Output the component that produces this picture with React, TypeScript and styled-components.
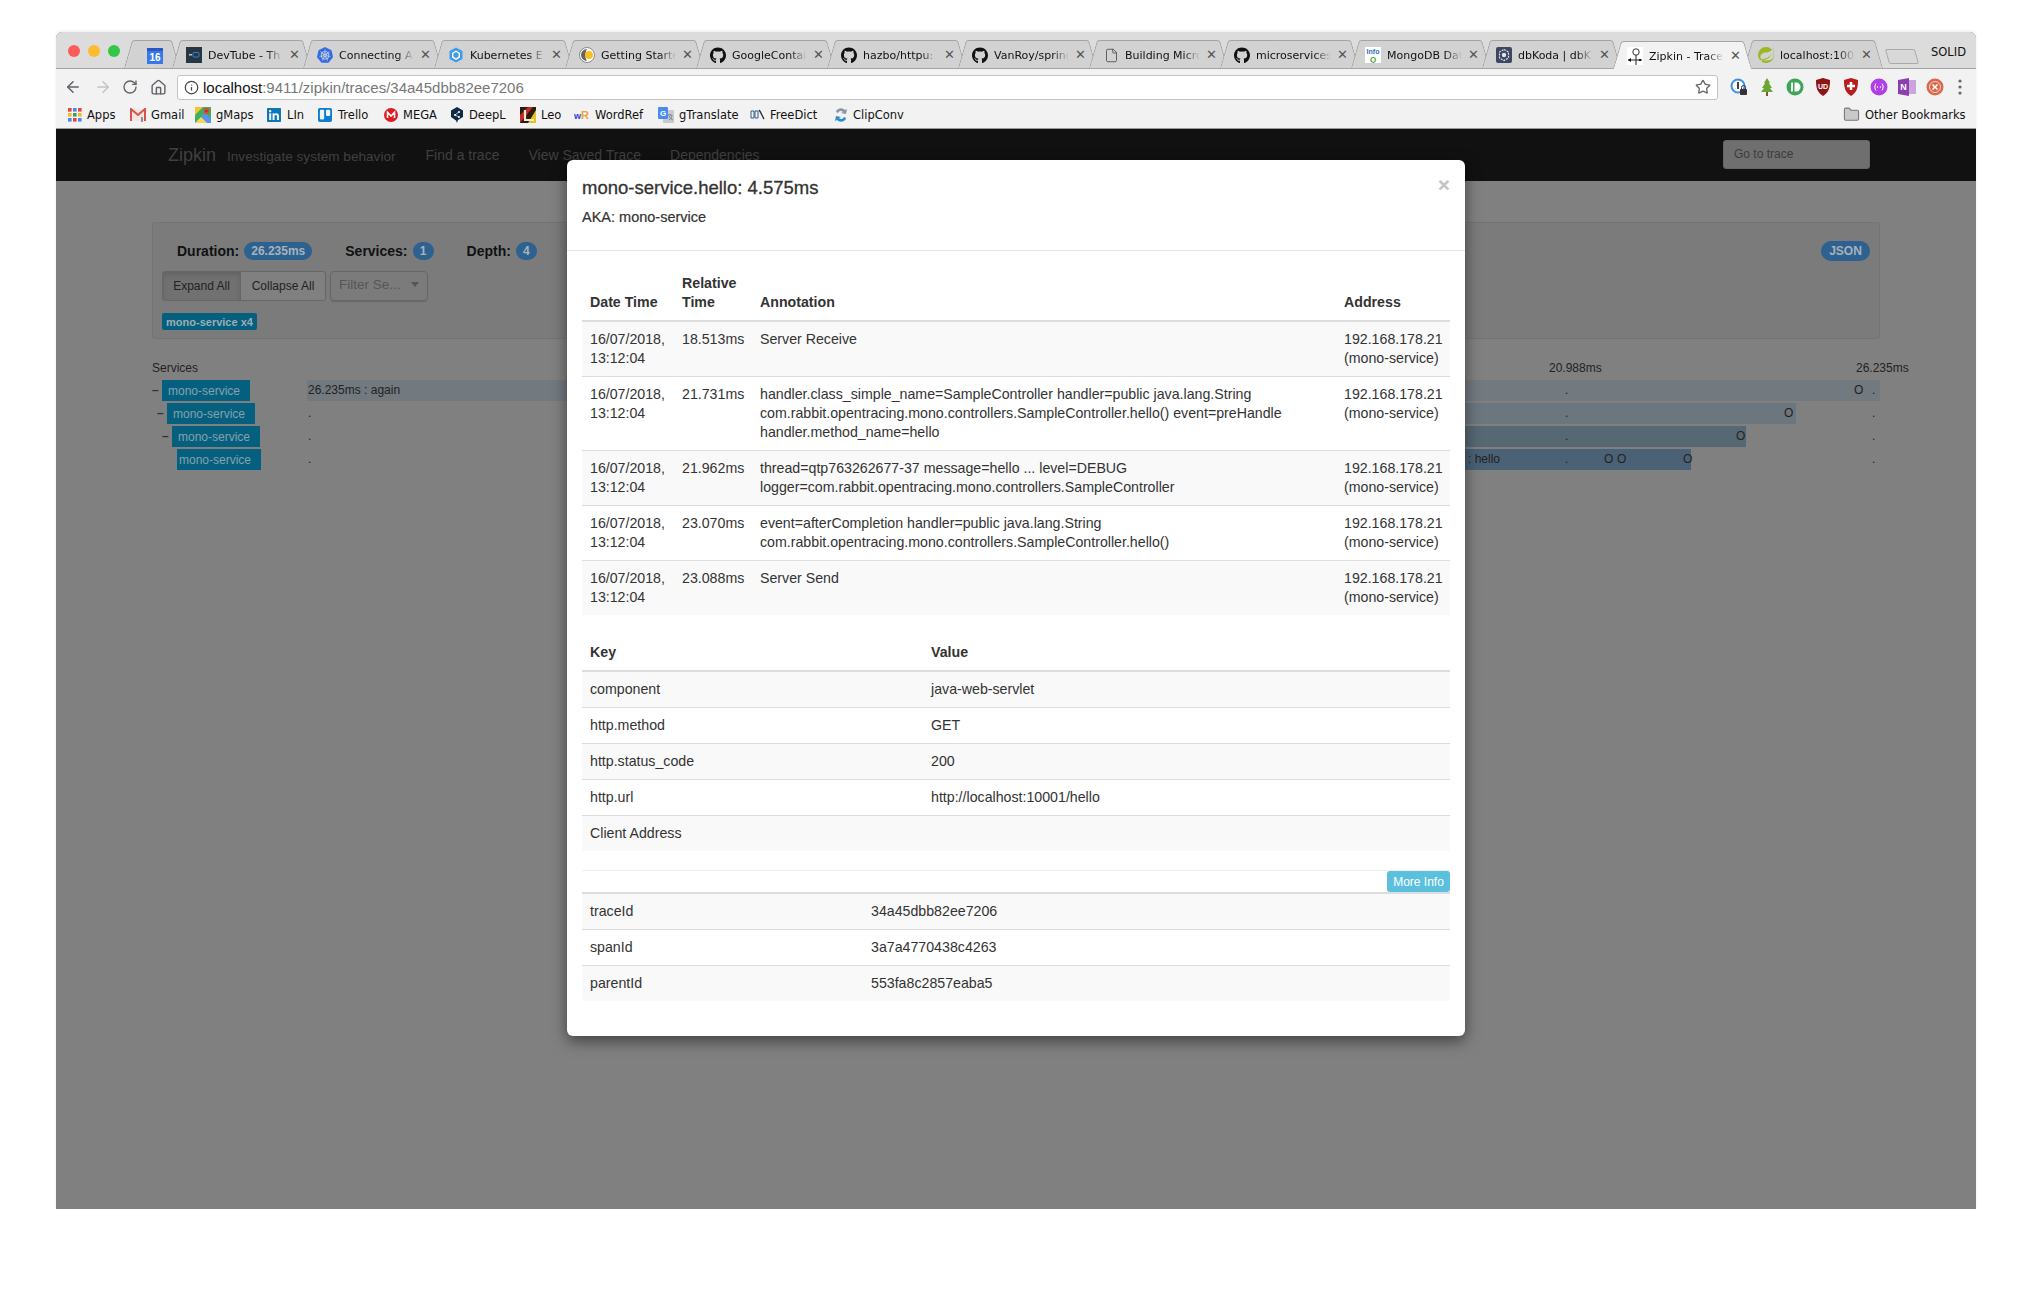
import React from 'react';
import styled, { createGlobalStyle } from 'styled-components';
import { ArrowLeft, ArrowRight, RotateCw, House, Info, Star, Folder, File } from 'lucide-react';
import { FaGithub, FaLinkedin, FaTrello } from 'react-icons/fa';
import { SiKubernetes, SiSpring } from 'react-icons/si';

const GlobalStyle = createGlobalStyle`
  html, body { margin: 0; padding: 0; background: #fff; }
  body { font-family: "Liberation Sans", Arial, sans-serif; font-size: 14px; color: #333; }
  * { box-sizing: border-box; }
`;

const Screen = styled.div`
  width: 2032px;
  height: 1290px;
  padding: 32px 56px 81px;
`;

const Win = styled.div`
  width: 1920px;
  height: 1177px;
  display: flex;
  flex-direction: column;
  border-radius: 6px 6px 0 0;
  overflow: hidden;
  background: #808080;
  box-shadow: 0 -1px 3px rgba(0, 0, 0, 0.08);
`;

/* browser chrome */
const TabStrip = styled.div`
  height: 37px;
  flex: none;
  display: flex;
  align-items: flex-end;
  padding-left: 72px;
  background: #dcdcdc;
  border-bottom: 1px solid #a4a4a4;
  position: relative;
`;

const Lights = styled.div`
  position: absolute;
  left: 12px;
  top: 13px;
  display: flex;
  gap: 8px;
`;

const Light = styled.span<{ $c: string }>`
  width: 12px;
  height: 12px;
  border-radius: 50%;
  background: ${(p) => p.$c};
`;

const Tab = styled.div<{ $active?: boolean; $w: number }>`
  width: ${(p) => p.$w}px;
  height: 28px;
  flex: none;
  position: relative;
  display: flex;
  align-items: center;
  padding: 2px 8px 0 10px;
  gap: 6px;
  font-family: "DejaVu Sans", sans-serif;
  font-size: 11px;
  color: #111;
  z-index: ${(p) => (p.$active ? 2 : 0)};
  margin-bottom: ${(p) => (p.$active ? '-1px' : '0')};

  &::before,
  &::after {
    content: '';
    position: absolute;
    top: 0;
    bottom: 0;
    width: 54%;
    background: ${(p) => (p.$active ? '#f2f2f2' : '#d2d2d2')};
    border-top: 1px solid #a4a4a4;
    transform-origin: bottom;
    z-index: -1;
  }
  &::before {
    left: -4px;
    border-left: 1px solid #a0a0a0;
    border-radius: 3px 0 0 0;
    transform: skewX(-16deg);
  }
  &::after {
    right: -4px;
    border-right: 1px solid #a0a0a0;
    border-radius: 0 3px 0 0;
    transform: skewX(16deg);
  }
`;

const PinnedTab = styled(Tab)`
  justify-content: center;
  padding: 2px 0 0 6px;
`;

const TabIcon = styled.span`
  width: 16px;
  height: 16px;
  flex: none;
  display: flex;
  align-items: center;
  justify-content: center;
`;

const TabTitle = styled.span`
  flex: 1;
  min-width: 0;
  white-space: nowrap;
  -webkit-mask-image: linear-gradient(90deg, #000 78%, transparent 100%);
  mask-image: linear-gradient(90deg, #000 78%, transparent 100%);
`;

const TabClose = styled.span`
  flex: none;
  width: 10px;
  font-size: 13px;
  line-height: 12px;
  color: #555;
  text-align: center;
`;

const NewTab = styled.div`
  width: 30px;
  height: 15px;
  margin: 0 0 4px 8px;
  border: 1px solid #aaa;
  border-radius: 2px;
  transform: skewX(16deg);
  background: #d8d8d8;
`;

const Profile = styled.div`
  position: absolute;
  right: 10px;
  top: 13px;
  font-family: "DejaVu Sans", sans-serif;
  font-size: 11.5px;
  color: #111;
`;

const Toolbar = styled.div`
  height: 32px;
  flex: none;
  display: flex;
  align-items: center;
  padding: 4px 0 0 8px;
  background: #f2f2f2;
`;

const NavBtn = styled.span<{ $w: number; $c?: string }>`
  width: ${(p) => p.$w}px;
  flex: none;
  display: flex;
  color: ${(p) => p.$c || '#5f6368'};
`;

const UrlBox = styled.div`
  width: 1541px;
  height: 25px;
  flex: none;
  display: flex;
  align-items: center;
  padding: 0 6px;
  gap: 4px;
  background: #fff;
  border: 1px solid #c4c4c4;
  border-radius: 3px;
  font-size: 15px;
  color: #777;
`;

const Host = styled.span`
  color: #111;
`;

const UrlText = styled.span`
  flex: 1;
`;

const Extensions = styled.div`
  display: flex;
  align-items: center;
  margin-left: 7px;
`;

const Ext = styled.span<{ $w: number }>`
  width: ${(p) => p.$w}px;
  display: flex;
  justify-content: center;
`;

const Bookmarks = styled.div`
  height: 28px;
  flex: none;
  display: flex;
  align-items: center;
  padding: 0 9px 0 12px;
  background: #f2f2f2;
  border-bottom: 1px solid #9a9a9a;
  font-family: "DejaVu Sans", sans-serif;
  font-size: 11.5px;
  color: #111;
`;

const Bookmark = styled.span<{ $w: number }>`
  width: ${(p) => p.$w}px;
  flex: none;
  display: flex;
  align-items: center;
  gap: 5px;
  white-space: nowrap;
`;

const BookmarkSpacer = styled.span`
  flex: 1;
`;

/* zipkin page, already dimmed by the modal backdrop */
const Page = styled.div`
  flex: 1;
  position: relative;
  background: #808080;
  color: #222;
`;

const Navbar = styled.div`
  height: 52px;
  background: #111;
  display: flex;
  align-items: center;
  padding-left: 112px;
  color: #404040;
`;

const Brand = styled.span`
  font-size: 18px;
  margin-right: 11px;
`;

const Tagline = styled.span`
  font-size: 13.6px;
  margin: 3px 30px 0 0;
`;

const NavLink = styled.span`
  font-size: 14px;
  margin-right: 29px;
`;

const GoTo = styled.div`
  width: 147px;
  height: 29px;
  margin: 0 106px 2px auto;
  padding: 0 10px;
  display: flex;
  align-items: center;
  background: #6f6f6f;
  border: 1px solid #666;
  border-radius: 3px;
  font-size: 12px;
  color: #3c3c3c;
`;

const Summary = styled.div`
  width: 1728px;
  height: 117px;
  margin: 41px 0 0 96px;
  padding: 18px 9px 0;
  background: #7b7b7b;
  border: 1px solid #737373;
  border-radius: 3px;
`;

const SummaryTop = styled.div`
  height: 20px;
  display: flex;
  align-items: center;
  padding-left: 15px;
  font-weight: 700;
  color: #111;
`;

const Stat = styled.span`
  font-size: 14px;
  margin-right: 5px;
`;

const Badge = styled.span<{ $gap: number; $w?: number }>`
  min-width: ${(p) => p.$w || 21}px;
  height: 18px;
  padding: 0 7px;
  margin-right: ${(p) => p.$gap}px;
  display: flex;
  align-items: center;
  justify-content: center;
  border-radius: 10px;
  background: #2c6190;
  color: #a9b2ba;
  font-size: 12px;
`;

const JsonBtn = styled.span`
  margin-left: auto;
  width: 49px;
  height: 20px;
  display: flex;
  align-items: center;
  justify-content: center;
  border-radius: 10px;
  background: #2c6190;
  color: #a9b2ba;
  font-size: 12px;
`;

const Controls = styled.div`
  display: flex;
  margin-top: 10px;
  gap: 4px;
`;

const BtnGroup = styled.div`
  display: flex;
`;

const GroupBtn = styled.span<{ $active?: boolean; $w: number }>`
  width: ${(p) => p.$w}px;
  height: 30px;
  display: flex;
  align-items: center;
  justify-content: center;
  border: 1px solid #666;
  font-size: 12px;
  color: #222;
  background: ${(p) => (p.$active ? '#717171' : '#808080')};
  box-shadow: ${(p) => (p.$active ? 'inset 0 3px 5px rgba(0,0,0,0.125)' : 'none')};
  border-radius: ${(p) => (p.$active ? '3px 0 0 3px' : '0 3px 3px 0')};
  margin-left: ${(p) => (p.$active ? '0' : '-1px')};
`;

const FilterSelect = styled.span`
  width: 98px;
  height: 30px;
  padding: 0 8px 4px;
  display: flex;
  align-items: center;
  justify-content: space-between;
  border: 1px solid #666;
  border-radius: 4px;
  box-shadow: 0 1px 1px rgba(0, 0, 0, 0.15);
  font-size: 13.5px;
  color: #565656;
`;

const Caret = styled.span`
  width: 0;
  height: 0;
  border-left: 4px solid transparent;
  border-right: 4px solid transparent;
  border-top: 5px solid #555;
`;

const ServiceTag = styled.span`
  display: inline-flex;
  align-items: center;
  margin-top: 12px;
  height: 17px;
  width: 95px;
  justify-content: center;
  border-radius: 2px;
  background: #05607f;
  color: #9eadb3;
  font-size: 11px;
  font-weight: 700;
`;

const Axis = styled.div`
  position: relative;
  height: 19px;
  margin: 20px 0 0 96px;
  font-size: 12px;
  line-height: 19px;
`;

const Tick = styled.span<{ $x: number }>`
  position: absolute;
  top: 0;
  left: ${(p) => p.$x}px;
`;

const Rows = styled.div`
  margin: 2px 0 0 96px;
  display: flex;
  flex-direction: column;
  gap: 2px;
`;

const Row = styled.div`
  display: flex;
  height: 21px;
`;

const Tree = styled.div<{ $indent: number }>`
  width: 155px;
  flex: none;
  display: flex;
  padding-left: ${(p) => p.$indent}px;
`;

const Toggle = styled.span`
  width: 10px;
  font-weight: 700;
  font-size: 12px;
  line-height: 20px;
  color: #333;
`;

const SvcName = styled.span<{ $w: number; $pad: number }>`
  width: ${(p) => p.$w}px;
  height: 21px;
  padding-left: ${(p) => p.$pad}px;
  display: flex;
  align-items: center;
  background: #05607f;
  color: #86a1ab;
  font-size: 12px;
`;

const Track = styled.div`
  width: 1573px;
  position: relative;
  font-size: 12px;
  line-height: 21px;
`;

const Bar = styled.div<{ $c: string }>`
  position: absolute;
  top: 0;
  bottom: 0;
  background: ${(p) => p.$c};
`;

const Mark = styled.span`
  position: absolute;
  top: 0;
  line-height: 21px;
  white-space: nowrap;
`;

/* modal */
const Modal = styled.div`
  position: absolute;
  left: 511px;
  top: 31px;
  width: 898px;
  height: 876px;
  background: #fff;
  border-radius: 6px;
  box-shadow: 0 5px 15px rgba(0, 0, 0, 0.5);
  color: #333;
`;

const ModalHeader = styled.div`
  height: 91px;
  padding: 15px;
  position: relative;
  border-bottom: 1px solid #e5e5e5;
`;

const ModalTitle = styled.div`
  font-size: 18.5px;
  line-height: 25px;
  font-weight: 400;
  -webkit-text-stroke: 0.3px #333;
`;

const Aka = styled.div`
  font-size: 14.5px;
  line-height: 19px;
  margin-top: 8px;
  -webkit-text-stroke: 0.2px #333;
`;

const CloseX = styled.span`
  position: absolute;
  right: 15px;
  top: 14px;
  font-size: 21px;
  line-height: 21px;
  font-weight: 700;
  color: #c4c4c4;
`;

const ModalBody = styled.div`
  padding: 15px;
`;

const Table = styled.table<{ $mb?: number }>`
  width: 868px;
  table-layout: fixed;
  border-collapse: collapse;
  font-size: 14.2px;
  line-height: 19px;
  margin-bottom: ${(p) => p.$mb || 0}px;

  th {
    padding: 8px;
    text-align: left;
    vertical-align: bottom;
    border-bottom: 2px solid #ddd;
    font-weight: 700;
  }
  td {
    padding: 8px;
    vertical-align: top;
    border-top: 1px solid #ddd;
  }
  td:last-child,
  th:last-child {
    padding-right: 0;
  }
  thead + tbody tr:first-child td {
    border-top: 0;
  }
  tbody tr:nth-child(odd) td {
    background: #f9f9f9;
  }
`;

const MoreRow = styled.div`
  display: flex;
  justify-content: flex-end;
  width: 868px;
  border-top: 1px solid #eee;
  border-bottom: 2px solid #ddd;
  margin-top: 19px;
`;

const MoreBtn = styled.span`
  width: 63px;
  height: 21px;
  display: flex;
  align-items: center;
  justify-content: center;
  background: #5bc0de;
  border-radius: 3px;
  color: #fff;
  font-size: 12px;
`;

const Kv = styled(Table)`
  td {
    border-top: 0;
    border-bottom: 1px solid #ddd;
  }
  tbody tr:last-child td {
    border-bottom: 0;
  }
`;

/* small drawn icons */
const Calendar = () => (
  <svg width="16" height="18" viewBox="0 0 16 18">
    <rect y="2" width="16" height="16" fill="#3b78e7" />
    <rect y="2" width="16" height="3" fill="#2a56c6" />
    <text x="8" y="15" textAnchor="middle" fontSize="10" fontFamily="Liberation Sans" fontWeight="700" fill="#fff">16</text>
  </svg>
);

const DevTube = () => (
  <svg width="16" height="16" viewBox="0 0 16 16">
    <rect width="16" height="16" fill="#263645" />
    <rect x="7" y="5.5" width="6" height="4.5" rx="1" fill="none" stroke="#2f86c6" />
    <rect x="3" y="7" width="3" height="1.5" fill="#b8c4cc" />
  </svg>
);

const Hex = () => (
  <svg width="16" height="16" viewBox="0 0 16 16">
    <path d="M8 0.5 14.5 4v8L8 15.5 1.5 12V4z" fill="#3f9ce8" />
    <path d="M8 3.5 12 6v4.5L8 13l-4-2.5V6z" fill="#fff" />
    <path d="M8 5 10.6 6.6v3L8 11.2 5.4 9.6v-3z" fill="#3f9ce8" />
  </svg>
);

const Crescent = () => (
  <svg width="16" height="16" viewBox="0 0 16 16">
    <circle cx="8" cy="8" r="7.5" fill="#fff" stroke="#888" />
    <path d="M8 2a6 6 0 0 0 0 12c-2-2-2-9 0-12z" fill="#666" />
    <circle cx="10" cy="8" r="4" fill="#f6c11d" />
  </svg>
);

const InfoQ = () => (
  <svg width="16" height="16" viewBox="0 0 16 16">
    <rect width="16" height="16" fill="#fff" />
    <text x="8" y="7" textAnchor="middle" fontSize="7" fontWeight="700" fontFamily="Liberation Sans" fill="#2a6fc9">Info</text>
    <text x="8" y="15" textAnchor="middle" fontSize="8" fontWeight="700" fontFamily="Liberation Sans" fill="#4a9a3a">Q</text>
  </svg>
);

const DbKoda = () => (
  <svg width="16" height="16" viewBox="0 0 16 16">
    <rect width="16" height="16" rx="2" fill="#3d4663" />
    <path d="M8 2.5 12.5 5v6L8 13.5 3.5 11V5z" fill="none" stroke="#dfe3ea" strokeWidth="1.2" strokeDasharray="2 1" />
    <circle cx="8" cy="8" r="2.2" fill="#dfe3ea" />
  </svg>
);

const ZipkinIcon = () => (
  <svg width="16" height="18" viewBox="0 0 16 18">
    <rect width="16" height="18" fill="#fff" />
    <circle cx="9" cy="5" r="3.2" fill="none" stroke="#333" />
    <path d="M9 8v10M1 13h14" stroke="#222" />
    <path d="M1 13l3-2v4z" fill="#111" />
    <rect x="12" y="12" width="2" height="2" fill="#111" />
  </svg>
);

const AppsGrid = () => (
  <svg width="14" height="14" viewBox="0 0 14 14">
    {[0, 1, 2].map((r) =>
      [0, 1, 2].map((c) => (
        <rect key={`${r}${c}`} x={c * 5} y={r * 5} width="3.6" height="3.6"
          fill={['#e8453c', '#f9bb2d', '#4688f1', '#3aa757'][(r + c * 2) % 4]} />
      ))
    )}
  </svg>
);

const Gmail = () => (
  <svg width="16" height="14" viewBox="0 0 16 14">
    <rect x="1" y="1" width="14" height="12" fill="#f2e6e4" />
    <path d="M1 13V1l7 6 7-6v12" fill="none" stroke="#d9534a" strokeWidth="2" />
    <path d="M12 14V9" stroke="#333" />
  </svg>
);

const GMaps = () => (
  <svg width="16" height="16" viewBox="0 0 16 16">
    <rect width="16" height="16" fill="#3eae62" />
    <path d="M0 16 10 6l6 6v4z" fill="#5a93ef" />
    <path d="M0 0h8L0 8z" fill="#f6c433" />
    <path d="M0 16 6 10l6 6z" fill="#f6d94a" />
    <circle cx="11.5" cy="4" r="3" fill="#e1483b" />
    <circle cx="11.5" cy="4" r="1" fill="#8e2a22" />
  </svg>
);

const Mega = () => (
  <svg width="14" height="14" viewBox="0 0 14 14">
    <circle cx="7" cy="7" r="7" fill="#e01b24" />
    <path d="M3.5 10V4.2L7 8l3.5-3.8V10" fill="none" stroke="#fff" strokeWidth="1.6" />
  </svg>
);

const DeepL = () => (
  <svg width="14" height="16" viewBox="0 0 14 16">
    <path d="M7 0 13 3.5v6.5L8 13l-1 3-1-2.5L1 10V3.5z" fill="#0f2b46" />
    <circle cx="5" cy="8" r="1" fill="#fff" />
    <circle cx="9" cy="5" r="1" fill="#fff" />
    <circle cx="9" cy="10" r="1" fill="#fff" />
    <path d="M5 8 9 5M5 8l4 2" stroke="#fff" strokeWidth="0.7" />
  </svg>
);

const Leo = () => (
  <svg width="16" height="16" viewBox="0 0 16 16">
    <rect width="16" height="16" fill="#2a1c10" />
    <path d="M8 16 16 3v13z" fill="#e8c21f" />
    <path d="M0 16V8L8 0h5z" fill="#c22a1d" />
    <path d="M5 3v10h9" fill="none" stroke="#efe9d6" strokeWidth="2.2" />
  </svg>
);

const WordRef = () => (
  <svg width="16" height="12" viewBox="0 0 16 12">
    <text x="0" y="10" fontSize="9" fontWeight="700" fontFamily="Liberation Sans" fill="#2a3fd0">w</text>
    <text x="7" y="10" fontSize="11" fontWeight="700" fontFamily="Liberation Sans" fill="#f0a040">R</text>
  </svg>
);

const GTranslate = () => (
  <svg width="16" height="16" viewBox="0 0 16 16">
    <rect x="5" y="3" width="11" height="13" fill="#c6cbd2" />
    <rect width="10" height="12" rx="1" fill="#4c8bf0" />
    <text x="5" y="9" textAnchor="middle" fontSize="8" fontWeight="700" fontFamily="Liberation Sans" fill="#fff">G</text>
    <path d="M10 8h4M12 7v1M11 13c2-1 3-3 3-5M11 9c1 2 2 3 4 4" stroke="#6a7583" fill="none" strokeWidth="0.8" />
  </svg>
);

const FreeDict = () => (
  <svg width="15" height="12" viewBox="0 0 15 12">
    <path d="M1 2h3v7H1zM5 2h3v7H5z" fill="none" stroke="#2c5f93" />
    <path d="M9 1c2 2 3 6 5 9" fill="none" stroke="#333" strokeWidth="1.4" />
  </svg>
);

const ClipConv = () => (
  <svg width="14" height="16" viewBox="0 0 14 16">
    <path d="M2 5a5 4 0 0 1 9-2l2-1-1 5-5-1 2-1a3 3 0 0 0-5 1z" fill="#8b96a0" />
    <path d="M12 11a5 4 0 0 1-9 2l-2 1 1-5 5 1-2 1a3 3 0 0 0 5-1z" fill="#2b8fc9" />
  </svg>
);

const OnePassword = () => (
  <svg width="18" height="18" viewBox="0 0 18 18">
    <circle cx="8" cy="8" r="6.5" fill="#fff" stroke="#3f8fe0" strokeWidth="2" />
    <rect x="7" y="4" width="2" height="7" fill="#444" />
    <rect x="10" y="11" width="7" height="6" rx="1" fill="#333" />
    <path d="M11.5 11V9.5a2 2 0 0 1 4 0V11" fill="none" stroke="#333" />
  </svg>
);

const Pine = () => (
  <svg width="14" height="18" viewBox="0 0 14 18">
    <path d="M7 0 10 5H8.8L12 10h-2l3 4H1l3-4H2l3.2-5H4z" fill="#6aa636" />
    <rect x="6" y="14" width="2" height="4" fill="#7b5a32" />
  </svg>
);

const GreenRing = () => (
  <svg width="18" height="18" viewBox="0 0 18 18">
    <circle cx="9" cy="9" r="8.5" fill="#3aa757" />
    <rect x="5" y="4.5" width="2" height="9" fill="#fff" />
    <path d="M8.5 4.5H10a4.5 4.5 0 0 1 0 9H8.5z" fill="#fff" />
  </svg>
);

const Shield = ({ c, children }: { c: string; children: React.ReactNode }) => (
  <svg width="16" height="18" viewBox="0 0 16 18">
    <path d="M1 2 8 0l7 2c0 8-1 12-7 16C2 14 1 10 1 2z" fill={c} />
    {children}
  </svg>
);

const PurpleDots = () => (
  <svg width="18" height="18" viewBox="0 0 18 18">
    <circle cx="9" cy="9" r="8.5" fill="#b13fe8" />
    <path d="M6 5.5C4.5 7 4.5 11 6 12.5M12 5.5c1.5 1.5 1.5 5.5 0 7" fill="none" stroke="#fff" />
    <circle cx="7.5" cy="9" r="0.7" fill="#fff" />
    <circle cx="10.5" cy="9" r="0.7" fill="#fff" />
  </svg>
);

const OneNote = () => (
  <svg width="18" height="18" viewBox="0 0 18 18">
    <rect x="5" y="2" width="13" height="14" fill="#c9a5dd" />
    <path d="M0 2 11 0v18L0 16z" fill="#8b3fb0" />
    <text x="5.5" y="12" textAnchor="middle" fontSize="9" fontWeight="700" fontFamily="Liberation Sans" fill="#fff">N</text>
  </svg>
);

const OrangeDot = () => (
  <svg width="18" height="18" viewBox="0 0 18 18">
    <circle cx="9" cy="9" r="8.5" fill="#d9694b" />
    <circle cx="9" cy="9" r="5.5" fill="none" stroke="#f3d3c6" />
    <path d="M6.5 6.5l5 5M11.5 6.5l-5 5" stroke="#fff" strokeWidth="1.5" />
  </svg>
);

const Kebab = () => (
  <svg width="4" height="16" viewBox="0 0 4 16">
    <circle cx="2" cy="2" r="1.6" fill="#666" />
    <circle cx="2" cy="8" r="1.6" fill="#666" />
    <circle cx="2" cy="14" r="1.6" fill="#666" />
  </svg>
);

const ghIcon = <FaGithub size={17} color="#111" />;

const tabs: { icon: React.ReactNode; title: string; active?: boolean }[] = [
  { icon: <DevTube />, title: 'DevTube - Th' },
  { icon: <SiKubernetes size={16} color="#326ce5" />, title: 'Connecting A' },
  { icon: <Hex />, title: 'Kubernetes E' },
  { icon: <Crescent />, title: 'Getting Starte' },
  { icon: ghIcon, title: 'GoogleContai' },
  { icon: ghIcon, title: 'hazbo/httpu:' },
  { icon: ghIcon, title: 'VanRoy/spring' },
  { icon: <File size={15} color="#555" strokeWidth={1.5} />, title: 'Building Micro' },
  { icon: ghIcon, title: 'microservices' },
  { icon: <InfoQ />, title: 'MongoDB Dat' },
  { icon: <DbKoda />, title: 'dbKoda | dbK' },
  { icon: <ZipkinIcon />, title: 'Zipkin - Trace', active: true },
  { icon: <SiSpring size={16} color="#9ab81f" />, title: 'localhost:100' },
];

const bookmarks: { icon: React.ReactNode; label: string; w: number }[] = [
  { icon: <AppsGrid />, label: 'Apps', w: 62 },
  { icon: <Gmail />, label: 'Gmail', w: 65 },
  { icon: <GMaps />, label: 'gMaps', w: 71 },
  { icon: <FaLinkedin size={16} color="#0a78b5" />, label: 'LIn', w: 51 },
  { icon: <FaTrello size={16} color="#0a7fd0" />, label: 'Trello', w: 67 },
  { icon: <Mega />, label: 'MEGA', w: 66 },
  { icon: <DeepL />, label: 'DeepL', w: 70 },
  { icon: <Leo />, label: 'Leo', w: 54 },
  { icon: <WordRef />, label: 'WordRef', w: 84 },
  { icon: <GTranslate />, label: 'gTranslate', w: 92 },
  { icon: <FreeDict />, label: 'FreeDict', w: 84 },
  { icon: <ClipConv />, label: 'ClipConv', w: 84 },
];

const extensions: { icon: React.ReactNode; w: number }[] = [
  { icon: <OnePassword />, w: 28 },
  { icon: <Pine />, w: 28 },
  { icon: <GreenRing />, w: 28 },
  {
    icon: (
      <Shield c="#8f1414">
        <text x="8" y="11" textAnchor="middle" fontSize="7" fontWeight="700" fontFamily="Liberation Sans" fill="#fff">UD</text>
      </Shield>
    ),
    w: 28,
  },
  {
    icon: (
      <Shield c="#b81c1c">
        <path d="M8 4v8M4 8h8" stroke="#fff" strokeWidth="2.5" />
      </Shield>
    ),
    w: 28,
  },
  { icon: <PurpleDots />, w: 28 },
  { icon: <OneNote />, w: 28 },
  { icon: <OrangeDot />, w: 28 },
  { icon: <Kebab />, w: 22 },
];

const spans = [
  { indent: 0, toggle: true, w: 88, pad: 6, bar: [0, 1573], c: '#72797f', label: '26.235ms : again', marks: [1551], dots: [1258, 1565] },
  { indent: 5, toggle: true, w: 88, pad: 6, bar: [300, 1489], c: '#6c767e', label: '', marks: [1481], dots: [1258, 1565] },
  { indent: 10, toggle: true, w: 88, pad: 6, bar: [700, 1439], c: '#566874', label: '', marks: [1433], dots: [1258, 1565] },
  { indent: 25, toggle: false, w: 84, pad: 2, bar: [1100, 1384], c: '#4a6176', label: ': hello', marks: [1301, 1314, 1380], dots: [1258, 1565] },
];

const annotations = [
  { time: '18.513ms', text: 'Server Receive' },
  { time: '21.731ms', text: 'handler.class_simple_name=SampleController handler=public java.lang.String com.rabbit.opentracing.mono.controllers.SampleController.hello() event=preHandle handler.method_name=hello' },
  { time: '21.962ms', text: 'thread=qtp763262677-37 message=hello ... level=DEBUG logger=com.rabbit.opentracing.mono.controllers.SampleController' },
  { time: '23.070ms', text: 'event=afterCompletion handler=public java.lang.String com.rabbit.opentracing.mono.controllers.SampleController.hello()' },
  { time: '23.088ms', text: 'Server Send' },
];

const tags = [
  ['component', 'java-web-servlet'],
  ['http.method', 'GET'],
  ['http.status_code', '200'],
  ['http.url', 'http://localhost:10001/hello'],
  ['Client Address', ''],
];

const ids = [
  ['traceId', '34a45dbb82ee7206'],
  ['spanId', '3a7a4770438c4263'],
  ['parentId', '553fa8c2857eaba5'],
];

const App: React.FC = () => {
  return (
    <Screen>
      <GlobalStyle />
      <Win>
        <TabStrip>
          <Lights>
            <Light $c="#fc5b57" />
            <Light $c="#fdbc2e" />
            <Light $c="#33c748" />
          </Lights>
          <PinnedTab $w={48}>
            <TabIcon><Calendar /></TabIcon>
          </PinnedTab>
          {tabs.map((t) => (
            <Tab key={t.title} $w={131} $active={t.active}>
              <TabIcon>{t.icon}</TabIcon>
              <TabTitle>{t.title}</TabTitle>
              <TabClose>✕</TabClose>
            </Tab>
          ))}
          <NewTab />
          <Profile>SOLID</Profile>
        </TabStrip>

        <Toolbar>
          <NavBtn $w={30}><ArrowLeft size={18} /></NavBtn>
          <NavBtn $w={28} $c="#c4c4c4"><ArrowRight size={18} /></NavBtn>
          <NavBtn $w={28}><RotateCw size={16} /></NavBtn>
          <NavBtn $w={27}><House size={17} /></NavBtn>
          <UrlBox>
            <Info size={15} color="#444" />
            <UrlText><Host>localhost</Host>:9411/zipkin/traces/34a45dbb82ee7206</UrlText>
            <Star size={16} color="#666" />
          </UrlBox>
          <Extensions>
            {extensions.map((e, i) => (
              <Ext key={i} $w={e.w}>{e.icon}</Ext>
            ))}
          </Extensions>
        </Toolbar>

        <Bookmarks>
          {bookmarks.map((b) => (
            <Bookmark key={b.label} $w={b.w}>
              {b.icon}
              {b.label}
            </Bookmark>
          ))}
          <BookmarkSpacer />
          <Bookmark $w={124}>
            <Folder size={17} color="#777" fill="#c8c8c8" strokeWidth={1.5} />
            Other Bookmarks
          </Bookmark>
        </Bookmarks>

        <Page>
          <Navbar>
            <Brand>Zipkin</Brand>
            <Tagline>Investigate system behavior</Tagline>
            <NavLink>Find a trace</NavLink>
            <NavLink>View Saved Trace</NavLink>
            <NavLink>Dependencies</NavLink>
            <GoTo>Go to trace</GoTo>
          </Navbar>

          <Summary>
            <SummaryTop>
              <Stat>Duration:</Stat>
              <Badge $gap={33}>26.235ms</Badge>
              <Stat>Services:</Stat>
              <Badge $gap={33}>1</Badge>
              <Stat>Depth:</Stat>
              <Badge $gap={0}>4</Badge>
              <JsonBtn>JSON</JsonBtn>
            </SummaryTop>
            <Controls>
              <BtnGroup>
                <GroupBtn $active $w={79}>Expand All</GroupBtn>
                <GroupBtn $w={86}>Collapse All</GroupBtn>
              </BtnGroup>
              <FilterSelect>
                Filter Se...
                <Caret />
              </FilterSelect>
            </Controls>
            <ServiceTag>mono-service x4</ServiceTag>
          </Summary>

          <Axis>
            Services
            <Tick $x={1397}>20.988ms</Tick>
            <Tick $x={1704}>26.235ms</Tick>
          </Axis>

          <Rows>
            {spans.map((s, i) => (
              <Row key={i}>
                <Tree $indent={s.indent}>
                  {s.toggle && <Toggle>–</Toggle>}
                  <SvcName $w={s.w} $pad={s.pad}>mono-service</SvcName>
                </Tree>
                <Track>
                  <Bar $c={s.c} style={{ left: s.bar[0], width: s.bar[1] - s.bar[0] }} />
                  {s.label && (
                    <Mark style={{ left: i === 0 ? 1 : 1161 }}>{s.label}</Mark>
                  )}
                  {i > 0 && <Mark style={{ left: 1 }}>.</Mark>}
                  {s.dots.map((d) => (
                    <Mark key={d} style={{ left: d }}>.</Mark>
                  ))}
                  {s.marks.map((m) => (
                    <Mark key={m} style={{ left: m - 4 }}>O</Mark>
                  ))}
                </Track>
              </Row>
            ))}
          </Rows>

          <Modal>
            <ModalHeader>
              <ModalTitle>mono-service.hello: 4.575ms</ModalTitle>
              <Aka>AKA: mono-service</Aka>
              <CloseX>×</CloseX>
            </ModalHeader>
            <ModalBody>
              <Table $mb={20}>
                <colgroup>
                  <col width="92" />
                  <col width="78" />
                  <col width="584" />
                  <col width="114" />
                </colgroup>
                <thead>
                  <tr>
                    <th>Date Time</th>
                    <th>Relative Time</th>
                    <th>Annotation</th>
                    <th>Address</th>
                  </tr>
                </thead>
                <tbody>
                  {annotations.map((a) => (
                    <tr key={a.time}>
                      <td>16/07/2018, 13:12:04</td>
                      <td>{a.time}</td>
                      <td>{a.text}</td>
                      <td>192.168.178.21 (mono-service)</td>
                    </tr>
                  ))}
                </tbody>
              </Table>

              <Table>
                <colgroup>
                  <col width="341" />
                  <col width="527" />
                </colgroup>
                <thead>
                  <tr>
                    <th>Key</th>
                    <th>Value</th>
                  </tr>
                </thead>
                <tbody>
                  {tags.map(([k, v]) => (
                    <tr key={k}>
                      <td>{k}</td>
                      <td>{v}</td>
                    </tr>
                  ))}
                </tbody>
              </Table>

              <MoreRow>
                <MoreBtn>More Info</MoreBtn>
              </MoreRow>
              <Kv>
                <colgroup>
                  <col width="281" />
                  <col width="587" />
                </colgroup>
                <tbody>
                  {ids.map(([k, v]) => (
                    <tr key={k}>
                      <td>{k}</td>
                      <td>{v}</td>
                    </tr>
                  ))}
                </tbody>
              </Kv>
            </ModalBody>
          </Modal>
        </Page>
      </Win>
    </Screen>
  );
};

export default App;
